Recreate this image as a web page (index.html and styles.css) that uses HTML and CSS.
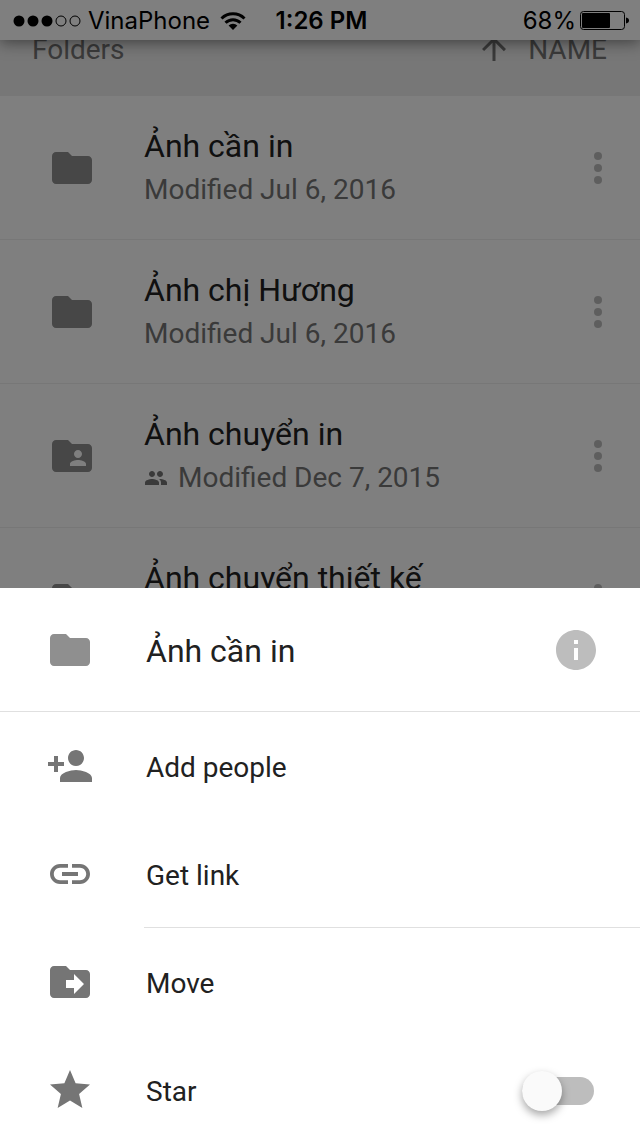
FILE: index.html
```html
<!DOCTYPE html>
<html lang="vi">
<head>
<meta charset="utf-8">
<meta name="viewport" content="width=device-width, initial-scale=1">
<title>Folders</title>
<link rel="stylesheet" href="styles.css">
</head>
<body>
<svg class="symbols" aria-hidden="true">
  <symbol id="folder" viewBox="0 0 24 24"><path d="M10 4H4c-1.100 0-2 .9-2 2v12c0 1.100.9 2 2 2h16c1.100 0 2-.9 2-2V8c0-1.100-.9-2-2-2h-8l-2-2z"/></symbol>
  <symbol id="folder-shared" viewBox="0 0 24 24"><path d="M20 6h-8l-2-2H4c-1.100 0-2 .9-2 2v12c0 1.100.9 2 2 2h16c1.100 0 2-.9 2-2V8c0-1.100-.9-2-2-2zm-5 3c1.100 0 2 .9 2 2s-.9 2-2 2-2-.9-2-2 .9-2 2-2zm4 8h-8v-1c0-1.330 2.670-2 4-2s4 .67 4 2v1z"/></symbol>
  <symbol id="more" viewBox="0 0 24 24"><circle cx="12" cy="6" r="2"/><circle cx="12" cy="12" r="2"/><circle cx="12" cy="18" r="2"/></symbol>
</svg>
<div class="app">
  <div class="behind">
    <header class="status">
      <div class="carrier">
        <svg class="signal" viewBox="0 0 68 12" aria-hidden="true"><circle cx="6" cy="6" r="5.500"/><circle cx="20" cy="6" r="5.500"/><circle cx="34" cy="6" r="5.500"/><g fill="none" stroke="#000"><circle cx="48" cy="6" r="5"/><circle cx="62" cy="6" r="5"/></g></svg>
        <span>VinaPhone</span>
        <svg class="wifi" viewBox="0 0 26 20" aria-hidden="true"><g fill="none" stroke="#000" stroke-width="3"><path d="M1.500 7.500a16.500 16.500 0 0 1 23 0"/><path d="M5.500 11.700a10.700 10.700 0 0 1 15 0"/></g><path d="M8.600 14.600a6.200 6.200 0 0 1 8.800 0L13 19z"/></svg>
      </div>
      <time class="clock">1:26 PM</time>
      <div class="power">
        <span>68%</span>
        <svg class="battery" viewBox="0 0 50 20" aria-hidden="true"><rect x=".5" y=".5" width="44" height="18" rx="3" fill="none" stroke="#000"/><rect x="2" y="2" width="28" height="15" rx="1"/><path d="M46 6.500c4 .5 4 5.500 0 6z"/></svg>
      </div>
    </header>
    <main class="browse">
      <div class="sort">
        <h1 class="sort-title">Folders</h1>
        <button class="sort-by" type="button">
          <svg viewBox="0 0 24 24" aria-hidden="true"><path d="M4 12l1.410 1.410L11 7.830V20h2V7.830l5.580 5.590L20 12l-8-8-8 8z"/></svg>
          <span>NAME</span>
        </button>
      </div>
      <ul class="folders">
        <li class="folder">
          <svg class="icon" aria-hidden="true"><use href="#folder"/></svg>
          <div class="about"><h2 class="name">Ảnh cần in</h2><p class="date">Modified Jul 6, 2016</p></div>
          <button class="more" type="button" aria-label="More"><svg class="icon" aria-hidden="true"><use href="#more"/></svg></button>
        </li>
        <li class="folder">
          <svg class="icon" aria-hidden="true"><use href="#folder"/></svg>
          <div class="about"><h2 class="name">Ảnh chị Hương</h2><p class="date">Modified Jul 6, 2016</p></div>
          <button class="more" type="button" aria-label="More"><svg class="icon" aria-hidden="true"><use href="#more"/></svg></button>
        </li>
        <li class="folder">
          <svg class="icon" aria-hidden="true"><use href="#folder-shared"/></svg>
          <div class="about"><h2 class="name">Ảnh chuyển in</h2><p class="date"><svg class="people" viewBox="0 0 24 24" aria-hidden="true"><path d="M16 11c1.660 0 2.990-1.340 2.990-3S17.660 5 16 5s-3 1.340-3 3 1.340 3 3 3zm-8 0c1.660 0 2.990-1.340 2.990-3S9.660 5 8 5 5 6.340 5 8s1.340 3 3 3zm0 2c-2.330 0-7 1.170-7 3.500V19h14v-2.500C15 14.170 10.330 13 8 13zm8 0c-.29 0-.62.020-.97.050 1.160.84 1.970 1.970 1.970 3.450V19h6v-2.500c0-2.330-4.670-3.500-7-3.500z"/></svg>Modified Dec 7, 2015</p></div>
          <button class="more" type="button" aria-label="More"><svg class="icon" aria-hidden="true"><use href="#more"/></svg></button>
        </li>
        <li class="folder">
          <svg class="icon" aria-hidden="true"><use href="#folder"/></svg>
          <div class="about"><h2 class="name">Ảnh chuyển thiết kế</h2><p class="date">&nbsp;</p></div>
          <button class="more" type="button" aria-label="More"><svg class="icon" aria-hidden="true"><use href="#more"/></svg></button>
        </li>
      </ul>
    </main>
  </div>
  <section class="sheet" aria-labelledby="sheet-title">
    <div class="sheet-head">
      <svg class="icon" aria-hidden="true"><use href="#folder"/></svg>
      <h2 class="sheet-title" id="sheet-title">Ảnh cần in</h2>
      <button class="info" type="button" aria-label="Details"><svg class="icon" viewBox="0 0 24 24" aria-hidden="true"><path d="M12 2C6.480 2 2 6.480 2 12s4.480 10 10 10 10-4.480 10-10S17.520 2 12 2zm1 15h-2v-6h2v6zm0-8h-2V7h2v2z"/></svg></button>
    </div>
    <button class="action" type="button">
      <svg class="icon" viewBox="0 0 24 24" aria-hidden="true"><path d="M15 12c2.210 0 4-1.790 4-4s-1.790-4-4-4-4 1.790-4 4 1.790 4 4 4zm-9-2V7H4v3H1v2h3v3h2v-3h3v-2H6zm9 4c-2.670 0-8 1.340-8 4v2h16v-2c0-2.660-5.330-4-8-4z"/></svg>
      <span class="label">Add people</span>
    </button>
    <button class="action" type="button">
      <svg class="icon" viewBox="0 0 24 24" aria-hidden="true"><path d="M3.900 12c0-1.710 1.390-3.100 3.100-3.100h4V7H7c-2.760 0-5 2.240-5 5s2.240 5 5 5h4v-1.900H7c-1.710 0-3.100-1.390-3.100-3.100zM8 13h8v-2H8v2zm9-6h-4v1.900h4c1.710 0 3.100 1.390 3.100 3.100s-1.390 3.100-3.100 3.100h-4V17h4c2.760 0 5-2.240 5-5s-2.240-5-5-5z"/></svg>
      <span class="label">Get link</span>
    </button>
    <hr class="divider">
    <button class="action" type="button">
      <svg class="icon" viewBox="0 0 24 24" aria-hidden="true"><path d="M20 6h-8l-2-2H4c-1.100 0-2 .9-2 2v12c0 1.100.9 2 2 2h16c1.100 0 2-.9 2-2V8c0-1.100-.9-2-2-2zm-6 12v-3h-4v-4h4V8l5 5-5 5z"/></svg>
      <span class="label">Move</span>
    </button>
    <label class="action">
      <svg class="icon" viewBox="0 0 24 24" aria-hidden="true"><path d="M12 17.270L18.180 21l-1.640-7.030L22 9.240l-7.190-.61L12 2 9.190 8.630 2 9.240l5.460 4.730L5.820 21z"/></svg>
      <span class="label">Star</span>
      <input class="switch" type="checkbox" role="switch">
    </label>
  </section>
</div>
</body>
</html>
```
FILE: styles.css
```css
* {
  box-sizing: border-box;
}

body {
  margin: 0;
  font-family: Roboto, "Noto Sans", sans-serif;
  font-size: 28px;
  color: #212121;
  background: #fff;
}

h1,
h2,
p,
ul {
  margin: 0;
  padding: 0;
  font-size: inherit;
  font-weight: 400;
}

button {
  padding: 0;
  border: 0;
  background: none;
  font: inherit;
  color: inherit;
}

svg {
  display: block;
  flex: none;
  fill: currentColor;
}

.symbols {
  position: absolute;
  width: 0;
  height: 0;
}

.icon {
  width: 48px;
  height: 48px;
}

.app {
  display: flex;
  flex-direction: column;
  height: 100vh;
  overflow: hidden;
}

/* Folder list, dimmed while the sheet is open */
.behind {
  position: relative;
  display: flex;
  flex: 1 1 0;
  flex-direction: column;
  min-height: 0;
  overflow: hidden;
}

.behind::after {
  content: "";
  position: absolute;
  inset: 0;
  z-index: 2;
  background: rgba(0, 0, 0, 0.5);
}

.status {
  position: relative;
  z-index: 1;
  display: grid;
  grid-template-columns: 1fr auto 1fr;
  flex: none;
  align-items: center;
  height: 40px;
  padding: 1px 10px 0 13px;
  font-family: Inter, sans-serif;
  font-size: 24px;
  line-height: 38px;
  color: #000;
  background: #fff;
  box-shadow: 0 2px 16px rgba(0, 0, 0, 0.5);
}

.carrier,
.power {
  display: flex;
  align-items: center;
}

.power {
  justify-content: flex-end;
  gap: 4px;
}

.signal {
  width: 68px;
  height: 12px;
  margin-right: 7px;
}

.wifi {
  width: 26px;
  height: 20px;
  margin-left: 10px;
}

.battery {
  width: 50px;
  height: 20px;
}

.clock {
  font-weight: 600;
}

.browse {
  flex: 1;
  min-height: 0;
}

/* The sort bar is scrolled partly under the status bar */
.sort {
  display: flex;
  align-items: center;
  justify-content: space-between;
  height: 96px;
  margin-top: -40px;
  padding: 2px 33px 0 32px;
  color: #757575;
  background: #eee;
}

.sort-by {
  display: flex;
  align-items: center;
  gap: 16px;
}

.sort-by svg {
  width: 36px;
  height: 36px;
}

.folders {
  list-style: none;
}

.folder {
  display: flex;
  align-items: center;
  height: 144px;
  padding: 0 18px 0 48px;
  border-bottom: 1px solid #eee;
  color: #8f8f8f;
}

.about {
  flex: 1;
  margin-left: 48px;
}

.name {
  padding-bottom: 1px;
  font-size: 32px;
  line-height: 44px;
  color: #212121;
}

.date {
  display: flex;
  align-items: center;
  gap: 10px;
  line-height: 42px;
  color: #757575;
}

.people {
  width: 24px;
  height: 24px;
}

.more {
  color: #bdbdbd;
}

/* Bottom sheet; its last row runs past the window's edge */
.sheet {
  flex: none;
  margin-bottom: -8px;
  background: #fff;
}

.sheet-head {
  display: flex;
  align-items: center;
  height: 124px;
  padding: 0 40px 0 46px;
  border-bottom: 1px solid #e0e0e0;
  color: #8f8f8f;
}

.sheet-title {
  flex: 1;
  margin-left: 52px;
  padding-top: 2px;
  font-size: 32px;
  color: #212121;
}

.info {
  color: #bdbdbd;
}

.action {
  display: flex;
  align-items: center;
  width: 100%;
  height: 108px;
  padding: 0 46px;
  color: #757575;
  text-align: left;
}

.label {
  flex: 1;
  margin-left: 52px;
  padding-top: 2px;
  color: #212121;
}

.divider {
  height: 1px;
  margin: -1px 0 0 144px;
  border: 0;
  background: #e0e0e0;
}

.switch {
  display: flex;
  align-items: center;
  width: 72px;
  height: 28px;
  margin: 2px 0 0;
  border-radius: 14px;
  appearance: none;
  background: #bdbdbd;
}

.switch::before {
  content: "";
  flex: none;
  width: 40px;
  height: 40px;
  border-radius: 50%;
  background: #fafafa;
  box-shadow: 0 4px 8px rgba(0, 0, 0, 0.35);
}

.switch:checked {
  justify-content: flex-end;
}
```
